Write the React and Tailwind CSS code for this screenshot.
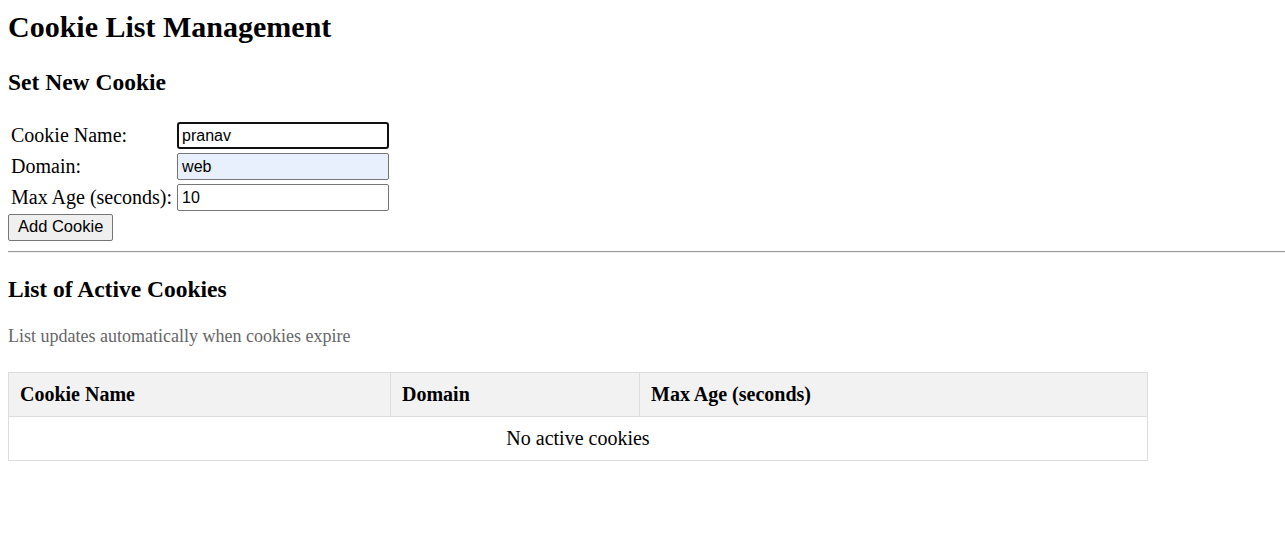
import React from "react";

export default function App() {
  return (
    <div className="pl-2 pt-2 font-['Liberation_Serif',serif] text-black bg-white">
      <h1 className="text-[30px] font-bold leading-[37px]">Cookie List Management</h1>
      <h2 className="mt-[24px] text-[23.5px] font-bold leading-[27px]">Set New Cookie</h2>
      <table className="mt-[23px] border-separate border-spacing-[2px] text-[20px]">
        <tbody>
          <tr>
            <td className="py-[1px] pl-[1px] pr-[2px] align-middle leading-[23px]">Cookie Name:</td>
            <td className="p-[1px] align-middle">
              <input
                readOnly
                value="pranav"
                className="block h-[27px] w-[212px] rounded-[3px] border-2 border-[#101010] bg-white px-[3px] font-['Liberation_Sans',sans-serif] text-base text-black outline-none"
              />
            </td>
          </tr>
          <tr>
            <td className="py-[1px] pl-[1px] pr-[2px] align-middle leading-[23px]">Domain:</td>
            <td className="p-[1px] align-middle">
              <input
                readOnly
                value="web"
                className="block h-[27px] w-[212px] rounded-[2px] border border-[#767676] bg-[#e8f0fe] px-1 font-['Liberation_Sans',sans-serif] text-base text-black outline-none"
              />
            </td>
          </tr>
          <tr>
            <td className="py-[1px] pl-[1px] pr-[2px] align-middle leading-[23px]">Max Age (seconds):</td>
            <td className="p-[1px] align-middle">
              <input
                readOnly
                value="10"
                className="block h-[27px] w-[212px] rounded-[2px] border border-[#767676] bg-white px-1 font-['Liberation_Sans',sans-serif] text-base text-black outline-none"
              />
            </td>
          </tr>
        </tbody>
      </table>
      <div>
        <button className="h-[27px] rounded-[2px] border border-[#767676] bg-[#efefef] px-[9px] pb-[3px] font-['Liberation_Sans',sans-serif] text-[16.5px] leading-[18px] text-black">
          Add Cookie
        </button>
      </div>
      <div className="mt-[10px] border-t border-b border-t-[#9a9a9a] border-b-[#eeeeee]" />
      <h2 className="mt-[23px] text-[23.5px] font-bold leading-[27px]">List of Active Cookies</h2>
      <p className="mt-[23px] text-[18px] leading-[21px] text-[#666666]">
        List updates automatically when cookies expire
      </p>
      <table className="mt-[25px] w-[1140px] border-collapse text-[20px]">
        <thead>
          <tr className="bg-[#f2f2f2]">
            <th className="w-[382px] border border-[#dddddd] px-[11px] py-[10px] text-left font-bold leading-[23px]">Cookie Name</th>
            <th className="w-[249px] border border-[#dddddd] px-[11px] py-[10px] text-left font-bold leading-[23px]">Domain</th>
            <th className="border border-[#dddddd] px-[11px] py-[10px] text-left font-bold leading-[23px]">Max Age (seconds)</th>
          </tr>
        </thead>
        <tbody>
          <tr>
            <td colSpan={3} className="border border-[#dddddd] px-[11px] py-[10px] text-center leading-[23px]">
              No active cookies
            </td>
          </tr>
        </tbody>
      </table>
    </div>
  );
}
